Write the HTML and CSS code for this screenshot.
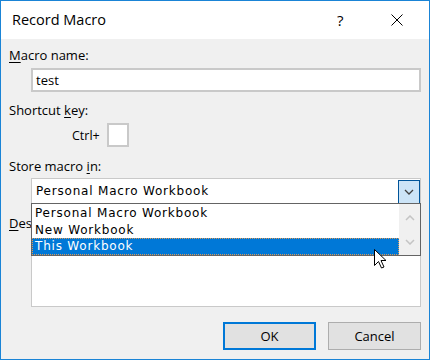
FILE: index.html
```html
<!DOCTYPE html>
<html>
<head>
<meta charset="utf-8">
<link rel="stylesheet" href="styles.css">
</head>
<body>
<div class="window">
  <div class="titlebar">
    <span class="title">Record Macro</span>
    <span class="help">?</span>
    <span class="close">
      <svg width="12" height="12" viewBox="0 0 12 12"><path d="M0.5 0.5 L11.5 11.5 M11.5 0.5 L0.5 11.5" stroke="#000" stroke-width="1" fill="none"/></svg>
    </span>
  </div>
  <div class="content">
    <div class="label l1"><u>M</u>acro name:</div>
    <div class="textbox"><span class="value">test</span></div>
    <div class="label l2">Shortcut <u>k</u>ey:</div>
    <div class="ctrlrow">
      <span class="ctrl">Ctrl+</span>
      <span class="keybox"></span>
    </div>
    <div class="label l3">Store macro <u>i</u>n:</div>
    <div class="combo-wrap">
      <div class="combo">
        <span class="combo-text">Personal Macro Workbook</span>
        <span class="drop">
          <svg width="10" height="6" viewBox="0 0 10 6"><path d="M1 1 L5 5 L9 1" stroke="#404040" stroke-width="1.3" fill="none"/></svg>
        </span>
      </div>
      <div class="list">
        <div class="items">
          <div class="item">Personal Macro Workbook</div>
          <div class="item">New Workbook</div>
          <div class="item selected">This Workbook</div>
        </div>
        <div class="scroll">
          <svg width="10" height="6" viewBox="0 0 10 6"><path d="M1 5 L5 1 L9 5" stroke="#c4c4c4" stroke-width="1.5" fill="none"/></svg>
          <svg width="10" height="6" viewBox="0 0 10 6"><path d="M1 1 L5 5 L9 1" stroke="#c4c4c4" stroke-width="1.5" fill="none"/></svg>
        </div>
      </div>
    </div>
    <div class="label l4"><u>D</u>escription:</div>
    <div class="desc"></div>
    <div class="buttons">
      <button class="btn ok">OK</button>
      <button class="btn">Cancel</button>
    </div>
    <svg class="cursor" width="13" height="20" viewBox="0 0 13 20">
      <path d="M0.5 0.5 L0.5 16.5 L4.5 12.5 L7.5 19 L10 18 L7 11.5 L12 11.5 Z" fill="#fff" stroke="#000" stroke-width="1" stroke-linejoin="miter"/>
    </svg>
  </div>
</div>
</body>
</html>
```

FILE: styles.css
```css
* { box-sizing: border-box; }
html, body { margin: 0; padding: 0; background: #f0f0f0; }
.window {
  width: 430px;
  height: 360px;
  border: 1px solid #1a84d6;
  display: flex;
  flex-direction: column;
  font-family: "Open Sans", "Noto Sans", sans-serif;
  color: #000;
  background: #f0f0f0;
}
.titlebar {
  height: 38px;
  flex: none;
  background: #fff;
  display: flex;
  align-items: center;
  padding-left: 11px;
}
.title { font-size: 14.5px; flex: 1; padding-bottom: 1px; }
.help { font-size: 15px; width: 14px; margin-right: 40px; padding-bottom: 1px; }
.close { width: 12px; height: 12px; margin-right: 26px; display: flex; }
.content {
  flex: 1;
  padding: 7px 7px 0 8px;
  display: flex;
  flex-direction: column;
  position: relative;
  font-size: 13px;
}
.label { line-height: 18px; height: 18px; }
.label u { text-decoration-thickness: 1px; text-underline-offset: 2px; }
.textbox {
  margin: 4px 0 0 22px;
  height: 24px;
  width: 390px;
  background: #fff;
  border: 2px solid #c9c9c9;
  display: flex;
  align-items: center;
  padding-left: 3px;
  font-size: 13px;
}
.l2 { margin-top: 9px; }
.ctrlrow {
  margin-top: 4px;
  height: 24px;
  display: flex;
  align-items: center;
  padding-left: 63px;
}
.ctrl { width: 35px; font-size: 12.5px; }
.keybox {
  width: 22px;
  height: 24px;
  background: #fff;
  border: 2px solid #c9c9c9;
}
.l3 { margin-top: 10px; }
.combo-wrap {
  margin: 3px 0 0 22px;
  width: 390px;
  position: relative;
}
.combo {
  height: 25px;
  background: #fff;
  border: 1px solid #c9c9c9;
  border-bottom: none;
  display: flex;
  align-items: center;
  justify-content: space-between;
  padding-left: 4px;
}
.combo-text, .item { font-family: "DejaVu Sans", sans-serif; font-size: 12px; letter-spacing: 0.8px; }
.drop {
  width: 22px;
  height: 24px;
  margin-top: 1px;
  background: #cce4f7;
  border: 1px solid #005499;
  display: flex;
  align-items: center;
  justify-content: center;
}
.list {
  position: absolute;
  top: 25px;
  left: 0;
  width: 390px;
  height: 53px;
  background: #fff;
  border: 1px solid #646464;
  display: flex;
  z-index: 2;
}
.items { flex: 1; display: flex; flex-direction: column; padding-top: 1px; }
.item { height: 16.5px; line-height: 16px; padding-left: 3px; }
.item.selected {
  height: 17px;
  background: #0078d7;
  color: #fff;
  border: 1px dotted #d99a5a;
  padding-left: 2px;
  line-height: 14px;
}
.scroll {
  width: 21px;
  background: #f0f0f0;
  display: flex;
  flex-direction: column;
  align-items: center;
  justify-content: space-between;
  padding: 11px 0 10px;
}
.l4 { margin-top: 11px; }
.desc {
  margin: 2px 0 0 22px;
  width: 390px;
  height: 73px;
  background: #fff;
  border: 1px solid #c9c9c9;
}
.buttons {
  margin-top: 15px;
  display: flex;
  justify-content: flex-end;
  gap: 12px;
  padding-right: 1px;
}
.btn {
  width: 93px;
  height: 28px;
  background: #e1e1e1;
  border: 1px solid #adadad;
  font-family: "Open Sans", "Noto Sans", sans-serif;
  font-size: 13px;
  color: #000;
  padding: 0;
}
.btn.ok { border: 2px solid #0078d7; }
.cursor {
  position: absolute;
  left: 373px;
  top: 210px;
  z-index: 3;
}
```
